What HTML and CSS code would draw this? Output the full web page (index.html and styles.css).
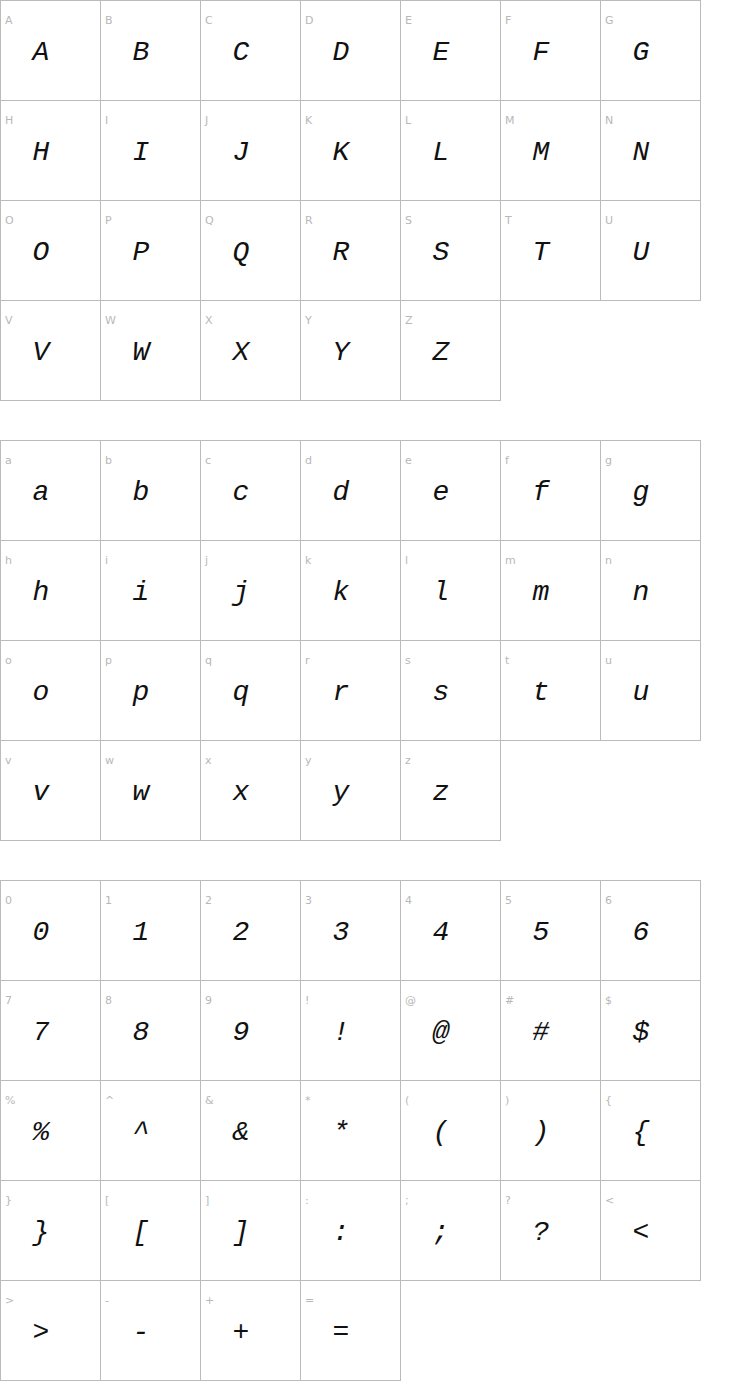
FILE: index.html
```html
<!DOCTYPE html>
<html>
<head>
<meta charset="utf-8">
<link rel="stylesheet" href="styles.css">
</head>
<body>
<div class="grid">
<div class="cell"><span class="lbl">A</span><span class="gl">A</span></div>
<div class="cell"><span class="lbl">B</span><span class="gl">B</span></div>
<div class="cell"><span class="lbl">C</span><span class="gl">C</span></div>
<div class="cell"><span class="lbl">D</span><span class="gl">D</span></div>
<div class="cell"><span class="lbl">E</span><span class="gl">E</span></div>
<div class="cell"><span class="lbl">F</span><span class="gl">F</span></div>
<div class="cell"><span class="lbl">G</span><span class="gl">G</span></div>
<div class="cell"><span class="lbl">H</span><span class="gl">H</span></div>
<div class="cell"><span class="lbl">I</span><span class="gl">I</span></div>
<div class="cell"><span class="lbl">J</span><span class="gl">J</span></div>
<div class="cell"><span class="lbl">K</span><span class="gl">K</span></div>
<div class="cell"><span class="lbl">L</span><span class="gl">L</span></div>
<div class="cell"><span class="lbl">M</span><span class="gl">M</span></div>
<div class="cell"><span class="lbl">N</span><span class="gl">N</span></div>
<div class="cell"><span class="lbl">O</span><span class="gl">O</span></div>
<div class="cell"><span class="lbl">P</span><span class="gl">P</span></div>
<div class="cell"><span class="lbl">Q</span><span class="gl">Q</span></div>
<div class="cell"><span class="lbl">R</span><span class="gl">R</span></div>
<div class="cell"><span class="lbl">S</span><span class="gl">S</span></div>
<div class="cell"><span class="lbl">T</span><span class="gl">T</span></div>
<div class="cell"><span class="lbl">U</span><span class="gl">U</span></div>
<div class="cell"><span class="lbl">V</span><span class="gl">V</span></div>
<div class="cell"><span class="lbl">W</span><span class="gl">W</span></div>
<div class="cell"><span class="lbl">X</span><span class="gl">X</span></div>
<div class="cell"><span class="lbl">Y</span><span class="gl">Y</span></div>
<div class="cell"><span class="lbl">Z</span><span class="gl">Z</span></div>
</div>
<div class="grid">
<div class="cell"><span class="lbl">a</span><span class="gl">a</span></div>
<div class="cell"><span class="lbl">b</span><span class="gl">b</span></div>
<div class="cell"><span class="lbl">c</span><span class="gl">c</span></div>
<div class="cell"><span class="lbl">d</span><span class="gl">d</span></div>
<div class="cell"><span class="lbl">e</span><span class="gl">e</span></div>
<div class="cell"><span class="lbl">f</span><span class="gl">f</span></div>
<div class="cell"><span class="lbl">g</span><span class="gl">g</span></div>
<div class="cell"><span class="lbl">h</span><span class="gl">h</span></div>
<div class="cell"><span class="lbl">i</span><span class="gl">i</span></div>
<div class="cell"><span class="lbl">j</span><span class="gl">j</span></div>
<div class="cell"><span class="lbl">k</span><span class="gl">k</span></div>
<div class="cell"><span class="lbl">l</span><span class="gl">l</span></div>
<div class="cell"><span class="lbl">m</span><span class="gl">m</span></div>
<div class="cell"><span class="lbl">n</span><span class="gl">n</span></div>
<div class="cell"><span class="lbl">o</span><span class="gl">o</span></div>
<div class="cell"><span class="lbl">p</span><span class="gl">p</span></div>
<div class="cell"><span class="lbl">q</span><span class="gl">q</span></div>
<div class="cell"><span class="lbl">r</span><span class="gl">r</span></div>
<div class="cell"><span class="lbl">s</span><span class="gl">s</span></div>
<div class="cell"><span class="lbl">t</span><span class="gl">t</span></div>
<div class="cell"><span class="lbl">u</span><span class="gl">u</span></div>
<div class="cell"><span class="lbl">v</span><span class="gl">v</span></div>
<div class="cell"><span class="lbl">w</span><span class="gl">w</span></div>
<div class="cell"><span class="lbl">x</span><span class="gl">x</span></div>
<div class="cell"><span class="lbl">y</span><span class="gl">y</span></div>
<div class="cell"><span class="lbl">z</span><span class="gl">z</span></div>
</div>
<div class="grid">
<div class="cell"><span class="lbl">0</span><span class="gl">0</span></div>
<div class="cell"><span class="lbl">1</span><span class="gl">1</span></div>
<div class="cell"><span class="lbl">2</span><span class="gl">2</span></div>
<div class="cell"><span class="lbl">3</span><span class="gl">3</span></div>
<div class="cell"><span class="lbl">4</span><span class="gl">4</span></div>
<div class="cell"><span class="lbl">5</span><span class="gl">5</span></div>
<div class="cell"><span class="lbl">6</span><span class="gl">6</span></div>
<div class="cell"><span class="lbl">7</span><span class="gl">7</span></div>
<div class="cell"><span class="lbl">8</span><span class="gl">8</span></div>
<div class="cell"><span class="lbl">9</span><span class="gl">9</span></div>
<div class="cell"><span class="lbl">!</span><span class="gl">!</span></div>
<div class="cell"><span class="lbl">@</span><span class="gl">@</span></div>
<div class="cell"><span class="lbl">#</span><span class="gl">#</span></div>
<div class="cell"><span class="lbl">$</span><span class="gl">$</span></div>
<div class="cell"><span class="lbl">%</span><span class="gl">%</span></div>
<div class="cell"><span class="lbl">^</span><span class="gl">^</span></div>
<div class="cell"><span class="lbl">&amp;</span><span class="gl">&amp;</span></div>
<div class="cell"><span class="lbl">*</span><span class="gl">*</span></div>
<div class="cell"><span class="lbl">(</span><span class="gl">(</span></div>
<div class="cell"><span class="lbl">)</span><span class="gl">)</span></div>
<div class="cell"><span class="lbl">{</span><span class="gl">{</span></div>
<div class="cell"><span class="lbl">}</span><span class="gl">}</span></div>
<div class="cell"><span class="lbl">[</span><span class="gl">[</span></div>
<div class="cell"><span class="lbl">]</span><span class="gl">]</span></div>
<div class="cell"><span class="lbl">:</span><span class="gl">:</span></div>
<div class="cell"><span class="lbl">;</span><span class="gl">;</span></div>
<div class="cell"><span class="lbl">?</span><span class="gl">?</span></div>
<div class="cell"><span class="lbl">&lt;</span><span class="gl">&lt;</span></div>
<div class="cell"><span class="lbl">&gt;</span><span class="gl">&gt;</span></div>
<div class="cell"><span class="lbl">-</span><span class="gl">-</span></div>
<div class="cell"><span class="lbl">+</span><span class="gl">+</span></div>
<div class="cell"><span class="lbl">=</span><span class="gl">=</span></div>
</div>
</body>
</html>
```
FILE: styles.css
```css
html, body {
  margin: 0;
  padding: 0;
  background: #fff;
}
body {
  width: 740px;
}
.grid {
  display: grid;
  grid-template-columns: repeat(7, 100px);
  grid-auto-rows: 100px;
  width: 701px;
  margin-bottom: 40px;
}
.cell {
  box-sizing: border-box;
  width: 101px;
  height: 101px;
  border: 1px solid #bbb;
  display: flex;
  flex-direction: column;
}
.lbl {
  display: block;
  font-family: "DejaVu Sans", sans-serif;
  font-size: 11px;
  line-height: 13px;
  color: #b8b8b8;
  padding: 13px 0 0 4px;
  height: 13px;
}
.gl {
  display: block;
  width: 80px;
  text-align: center;
  font-family: "Liberation Mono", monospace;
  font-style: italic;
  font-size: 28px;
  line-height: 32px;
  margin-top: 10px;
  color: #111;
}
```
